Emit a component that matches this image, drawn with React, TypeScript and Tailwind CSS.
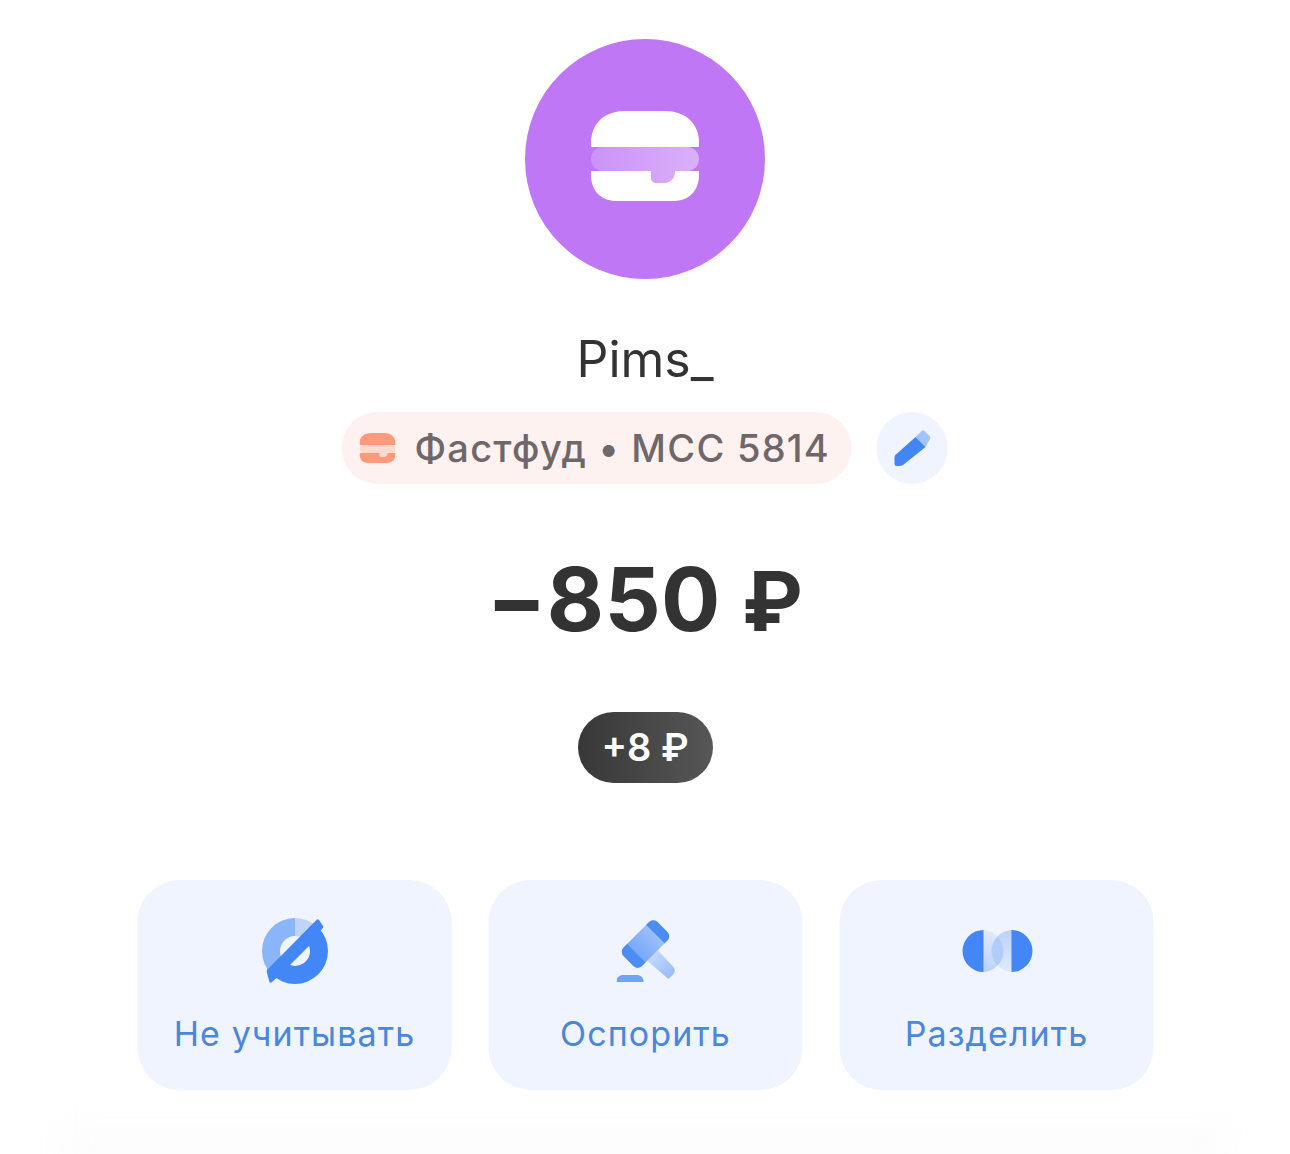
import type { ReactNode } from "react";

const Burger = ({ className, bun, filling }: { className: string; bun: string; filling: string }) => (
    <svg viewBox="0 0 108 90" className={className}>
        <defs>
            <linearGradient id="burger-filling" x1="0" x2="1" y1="0" y2="0">
                <stop offset="0" stopColor="#fff" stopOpacity="0.2" />
                <stop offset="1" stopColor="#fff" stopOpacity="0.42" />
            </linearGradient>
        </defs>
        <path fill={bun} d="M0 36V32C0 12 14 0 34 0H74C94 0 108 12 108 32V36Z" />
        <path fill={filling} d="M12 36H96C103 36 108 41 108 48C108 55 103 60 96 60H84C84 68 79 72 72 72H66C62 72 60 70 60 66V60H12C5 60 0 55 0 48C0 41 5 36 12 36Z" />
        <path fill={bun} d="M0 60H60V66C60 70 62 72 66 72H72C79 72 84 68 84 60H108V64C108 80 98 90 82 90H26C10 90 0 80 0 64Z" />
    </svg>
);

const Pencil = () => (
    <svg viewBox="0 0 38 38" className="w-[38px] h-[38px]">
        <path fill="#a3c3fb" d="M22 8L28 2C29 1 30 1 31 2L36 7C37 8 37 9 36.500 10L32 18Z" />
        <path fill="#4285f4" d="M22 8L32 18L12 34C10 36 8 37 6 37H3C1.500 37 1 36 1 34V29C1 27 1.500 26 3 25Z" />
    </svg>
);

const EyeOffIcon = () => (
    <svg viewBox="0 0 68 68" className="w-[68px] h-[68px] translate-x-[0.5px]">
        <defs>
            <clipPath id="eye-upper"><path d="M-5 -5H64L-5 64Z" /></clipPath>
            <clipPath id="eye-lower"><path d="M70 -11V70H-11Z" /></clipPath>
            <clipPath id="eye-left"><rect x="0" y="0" width="34" height="68" /></clipPath>
            <clipPath id="eye-right"><rect x="34" y="0" width="34" height="68" /></clipPath>
        </defs>
        <g clipPath="url(#eye-upper)">
            <path clipPath="url(#eye-left)" fill="#8ab5fa" fillRule="evenodd" d="M1 34a33 33 0 1 0 66 0a33 33 0 1 0-66 0ZM19 34a15 15 0 1 0 30 0a15 15 0 1 0-30 0Z" />
            <path clipPath="url(#eye-right)" fill="#bdd5fd" fillRule="evenodd" d="M1 34a33 33 0 1 0 66 0a33 33 0 1 0-66 0ZM19 34a15 15 0 1 0 30 0a15 15 0 1 0-30 0Z" />
        </g>
        <path clipPath="url(#eye-lower)" fill="#4287f5" fillRule="evenodd" d="M1 34a33 33 0 1 0 66 0a33 33 0 1 0-66 0ZM19 34a15 15 0 1 0 30 0a15 15 0 1 0-30 0Z" />
        <path fill="#4287f5" d="M55 3.500C56 2 57 2 58 3L62 9C62.500 10 62.500 11 61 12L48 29L29 48L11 65C10 66 9 66 8.500 65L6 56C5.500 54 5.500 53 7 52Z" />
    </svg>
);

const GavelIcon = () => (
    <svg viewBox="0 0 60 64" className="w-[60px] h-[64px] translate-x-[1px]">
        <defs>
            <linearGradient id="gavel-head" x1="0" x2="1" y1="0.5" y2="0.5">
                <stop offset="0" stopColor="#6a9ff7" />
                <stop offset="1" stopColor="#a9c8fb" />
            </linearGradient>
            <linearGradient id="gavel-handle" x1="0" x2="1" y1="0" y2="1">
                <stop offset="0" stopColor="#cfe0fd" />
                <stop offset="1" stopColor="#8fb8fa" />
            </linearGradient>
        </defs>
        <path fill="url(#gavel-handle)" d="M41 31L56 47C59 50 59 53 56 56L52 60L30 41Z" />
        <g transform="rotate(-45 29 25)">
            <rect x="5" y="12" width="48" height="26" rx="6" fill="url(#gavel-head)" />
            <path fill="#4c8cf5" d="M5 18a6 6 0 0 1 6-6h5v26h-5a6 6 0 0 1-6-6ZM43 12h4a6 6 0 0 1 6 6v14a6 6 0 0 1-6 6h-4Z" />
        </g>
        <path fill="#6fa3f7" d="M0 63C0 58 3 56 7 56H20C24 56 27 58 27 63Z" />
    </svg>
);

const SplitIcon = () => (
    <svg viewBox="0 0 72 42" className="w-[72px] h-[42px] translate-x-[1px]">
        <defs>
            <linearGradient id="split-left" x1="0" x2="0" y1="0" y2="1">
                <stop offset="0" stopColor="#4287f5" stopOpacity="0.08" />
                <stop offset="1" stopColor="#4287f5" stopOpacity="0.32" />
            </linearGradient>
            <linearGradient id="split-right" x1="0" x2="0" y1="0" y2="1">
                <stop offset="0" stopColor="#4287f5" stopOpacity="0.32" />
                <stop offset="1" stopColor="#4287f5" stopOpacity="0.08" />
            </linearGradient>
        </defs>
        <path fill="url(#split-left)" d="M21 0a21 21 0 0 1 0 42Z" />
        <path fill="url(#split-right)" d="M51 0a21 21 0 0 0 0 42Z" />
        <path fill="#4287f5" d="M22 0a21 21 0 0 0 0 42Z" />
        <path fill="#4287f5" d="M50 0a21 21 0 0 1 0 42Z" />
    </svg>
);

const ActionCard = ({ icon, label }: { icon: ReactNode; label: string }) => (
    <button className="w-[314.5px] h-[210px] rounded-[42px] bg-[#f0f4fe] flex flex-col items-center">
        <div className="h-[142px] flex items-center justify-center">{icon}</div>
        <span className="text-[34px] leading-[24px] tracking-[1.1px] text-[#4a87dc]">{label}</span>
    </button>
);

const App = () => {
    return (
        <div className="relative w-[1290px] h-[1154px] overflow-hidden bg-white font-['Inter',sans-serif] flex flex-col items-center pt-[39px]">
            <div className="w-[240px] h-[240px] rounded-full bg-[#bf77f6] flex items-center justify-center">
                <Burger className="w-[108px] h-[90px] -translate-y-[3px]" bun="#fff" filling="url(#burger-filling)" />
            </div>

            <h1 className="mt-[50px] h-[60px] text-[50px] leading-[60px] font-normal text-[#333333]">Pims_</h1>

            <div className="mt-[23px] flex gap-[25px] h-[72px] -translate-x-[0.5px]">
                <div className="w-[510px] rounded-full bg-[#fdf2f0] flex items-center pl-[18px]">
                    <Burger className="w-[36px] h-[30px]" bun="#fd9a7c" filling="#fddacd" />
                    <span className="ml-[19px] text-[38px] font-medium tracking-[1.25px] text-[#70676a] whitespace-nowrap">Фастфуд • MCC 5814</span>
                </div>
                <button className="w-[71px] rounded-full bg-[#eff4fe] flex items-center justify-center">
                    <Pencil />
                </button>
            </div>

            <div className="mt-[50px] h-[130px] text-[88px] leading-[130px] font-bold tracking-[0.4px] text-[#333333] whitespace-nowrap">−850 <span className="text-[82px]">₽</span></div>

            <div className="mt-[48px] w-[135px] h-[71px] rounded-[36px] bg-gradient-to-r from-[#383838] to-[#575757] flex items-center justify-center text-[38px] font-semibold text-white">+8 ₽</div>

            <div className="mt-[97px] flex gap-[36.5px] translate-x-[0.5px]">
                <ActionCard icon={<EyeOffIcon />} label="Не учитывать" />
                <ActionCard icon={<GavelIcon />} label="Оспорить" />
                <ActionCard icon={<SplitIcon />} label="Разделить" />
            </div>

            <div className="absolute left-[60px] right-[60px] bottom-0 h-[40px] bg-gradient-to-b from-white to-[#fafafa] blur-[14px]"></div>
        </div>
    );
};

export default App;
